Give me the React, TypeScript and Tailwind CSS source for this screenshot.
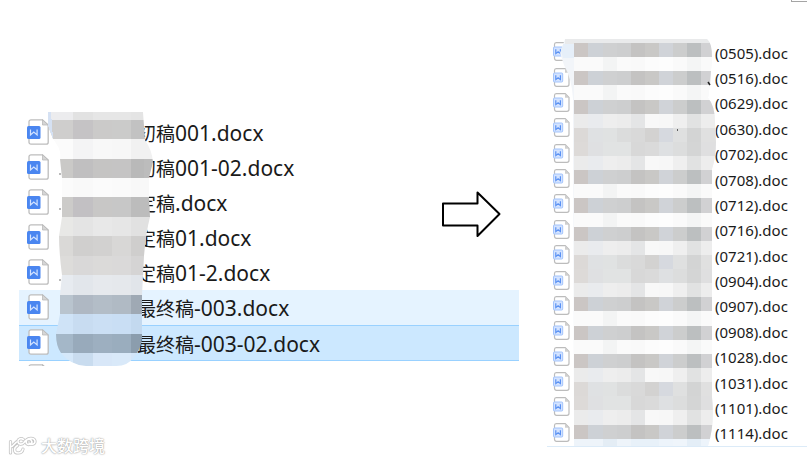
const drafts = [
  { name: "初稿", suffix: "001.docx" },
  { name: "初稿", suffix: "001-02.docx" },
  { name: "定稿", suffix: ".docx" },
  { name: "定稿", suffix: "01.docx" },
  { name: "定稿", suffix: "01-2.docx" },
  { name: "最终稿", suffix: "-003.docx", row: "h-[35px] bg-[#e5f3ff]" },
  { name: "最终稿", suffix: "-003-02.docx", row: "h-9 bg-[#cce8ff] border-y border-[#99d1ff]" },
];

const dates = [
  "0505", "0516", "0629", "0630", "0702", "0708", "0712", "0716",
  "0721", "0904", "0907", "0908", "1028", "1031", "1101", "1114",
];

// Each entry is one band: [top, bottom, one colour per column]
const draftBands: [number, number, string[]][] = [
  [0, 8, ["#ececee", "#e2e2e2", "#e6e6e6", "#e6e6e6", "#e4e4e4", "#e4e4e4"]],
  [8, 27, ["#cfcecd", "#c5c3c5", "#cbcac9", "#cbcbca", "#c2c2c2", "#c2c2c2"]],
  [27, 47, ["#fbfbfb", "#f4f4f5", "#f8f8f8", "#f7f7f7", "#f1f1f1", "#f1f1f1"]],
  [47, 66, ["#cac9c7", "#c0bfc0", "#c5c4c3", "#c5c4c4", "#b9b9b9", "#bcbcbc"]],
  [66, 85, ["#fbfbfb", "#f9f9f9", "#fbfbfb", "#fafafa", "#f8f8f8", "#f8f8f8"]],
  [85, 105, ["#cccbc9", "#c2c0c3", "#c8c7c6", "#c7c7c7", "#bcbcbc", "#bcbcbc"]],
  [105, 124, ["#e8e8e6", "#e4e4e4", "#e8e8e8", "#e6e6e6", "#e1e1e1", "#e1e1e1"]],
  [124, 144, ["#dad9d7", "#d0cfce", "#d2d1d0", "#d8d7d6", "#cfcecd", "#cfcecd"]],
  [144, 163, ["#dddcda", "#d9d8d8", "#dbdad9", "#dad9d9", "#d5d4d4", "#d5d4d4"]],
  [163, 183, ["#e7ebf0", "#e2e6eb", "#e6e9ed", "#e5e8ec", "#e1e5ea", "#e1e5ea"]],
  [183, 202, ["#b9c4ce", "#afb8c3", "#b3bdc7", "#b0bac4", "#9fa9b4", "#9fa9b4"]],
  [202, 222, ["#cfe3f7", "#c8dcf1", "#cbdff4", "#c9def4", "#c3d9ef", "#c3d9ef"]],
  [222, 241, ["#a4b7c8", "#98aabb", "#9dafc0", "#9aadbe", "#8b9dad", "#8b9dad"]],
  [241, 254, ["#d5e8fa", "#c9dcef", "#d8e7f8", "#d9e9f9", "#d3e6f9", "#d3e6f9"]],
];
const draftColumns = [0, 25, 45, 64, 83, 96, 108];

const dark = ["#cbc6c4", "#cdd1d6", "#cfd0d1", "#cdcecf", "#c4c3c2", "#c9c8c6", "#d0d3d8", "#cccdcd", "#bcbfc0", "#d1d1d3"];
const pale = ["#fafafa", "#fafafa", "#f3f4f4", "#fafafa", "#f9f9f9", "#fcfcfc", "#fdfdfd", "#fafafa", "#f4f5f5", "#fafafa"];
const soft = ["#ebebeb", "#e9ebee", "#eeeeee", "#ececec", "#e4e5e6", "#f8f8f8", "#f7f7f7", "#efefef", "#e1e2e2", "#ededed"];
const mid = ["#dcd9d7", "#dfe1e3", "#e0e2e2", "#dbdcdc", "#d9d9d9", "#d3d2d1", "#d6d9df", "#dfe0e0", "#d3d4d4", "#e0e0e0"];
const even = ["#dddad8", "#dfe0e2", "#e1e3e3", "#e1e3e3", "#d8d8d8", "#dadada", "#dee0e2", "#dcdddd", "#d4d5d5", "#dfdfe0"];
const blue = ["#eef4fa", "#eef4fa", "#e4edf5", "#eef4fa", "#e8f1f9", "#e8f1f9", "#edf4fb", "#eff5fb", "#e4eef7", "#edf4fb"];
const dateBands = [
  dark, pale, dark, pale, dark, soft, mid, even, soft,
  dark, pale, dark, pale, dark, soft, mid, even, soft,
  dark, pale, dark, pale, dark, soft, mid, even, soft,
  dark, blue,
];

function DocxIcon() {
  return (
    <svg width="22" height="26" viewBox="0 0 22 26" fill="none" className="mb-0.5 shrink-0">
      <path d="M4 .8h11.5L21.2 6v17.2a2 2 0 0 1-2 2H4a2 2 0 0 1-2-2V2.800a2 2 0 0 1 2-2Z" fill="#fff" stroke="#bdbdbd" strokeWidth="1.3" />
      <path d="M15.5.8V6h5.7Z" fill="#d6d6d6" stroke="#b9b9b9" strokeWidth=".8" />
      <rect y="7" width="13.5" height="13" rx="1.500" fill="#4a86f0" />
      <path d="M3.500 10.500v5.500l3.300-3 3.300 3v-5.500" stroke="#d3e3ff" strokeWidth="1.200" />
    </svg>
  );
}

function DocIcon() {
  return (
    <svg width="17" height="19" viewBox="0 0 17 19" fill="none" className="mb-0.5 shrink-0">
      <path d="M3.2.7h9L16 4.6v11.7a2 2 0 0 1-2 2H3.500a2 2 0 0 1-2-2V2.500A1.800 1.800 0 0 1 3.200.7Z" fill="#fff" stroke="#bcbcbc" strokeWidth="1.2" />
      <path d="M12 .7v4h4Z" fill="#cfcfcf" />
      <rect x=".5" y="5" width="9.200" height="9" rx="1" fill="#d3e3ff" stroke="#a3c4fc" />
      <path d="M2.800 7.200v4.400l2.300-1.900 2.300 1.900V7.200" stroke="#5a91f3" strokeWidth="1.2" />
    </svg>
  );
}

function DraftMosaic() {
  return (
    <svg width="108" height="254" viewBox="0 0 108 254" className="absolute left-[29px] -top-[3px]" aria-hidden="true">
      <clipPath id="draft-shape">
        <path d="M0 0H95L97 28Q104 38 105 50L101 66V85L102 105Q98 120 96 144L94 183V222H94Q95 234 86 245Q80 254 68 254H38Q22 253 13 241Q8 234 8 222L12 202V183L14 163Q11 140 11 124L14 105V66L12 47Q14 38 5 27L0 14Z" />
      </clipPath>
      <g clipPath="url(#draft-shape)" shapeRendering="crispEdges">
        {draftBands.map(([top, bottom, colors]) =>
          colors.map((color, i) => (
            <rect
              key={`${top}-${i}`}
              x={draftColumns[i]}
              y={top}
              width={draftColumns[i + 1] - draftColumns[i]}
              height={bottom - top}
              fill={color}
            />
          ))
        )}
        <path d="M0 0h3L5 27 0 14Z" fill="#d5e1f3" />
      </g>
      <path d="M11 62h2M11 97h2M11 168h2" stroke="#777" strokeWidth="1.2" />
    </svg>
  );
}

function DateMosaic() {
  return (
    <svg width="160" height="407" viewBox="0 0 160 407" className="absolute left-3 -top-px" aria-hidden="true">
      <clipPath id="date-shape">
        <path d="M6 0H148Q153 4 153 18L151 45L149 59Q156 66 156 84L157 103Q157 118 153 130V358Q156 385 149 407H15L14 60Q13 40 5 26L1 14Z" />
      </clipPath>
      <g clipPath="url(#date-shape)">
        <rect width="160" height="407" fill="#f2f5f9" />
        <rect x="6" width="154" height="5" fill="#e9eaeb" />
        <path d="M0 5h16v14H4Z" fill="#e6eff9" />
        <g shapeRendering="crispEdges">
          {dateBands.map((colors, row) =>
            colors.map((color, i) => (
              <rect
                key={`${row}-${i}`}
                x={15.3 + i * 14.13}
                y={4 + row * 14.13}
                width={i === 9 ? 20 : 14.13}
                height="14.13"
                fill={color}
              />
            ))
          )}
        </g>
      </g>
      <path d="M149 43l2 3" stroke="#222" strokeWidth="1.5" />
      <path d="M118 91h1" stroke="#333" strokeWidth="1.5" />
    </svg>
  );
}

function Watermark() {
  const mark =
    "M2.500 5.500V17M8.500 6 4 10.500M9.500 9.500C5 12 6 17 10 17c3 0 4.500-1.500 5-4M15.500 3.500c-3-2-6 0-5.500 2.500s4 3 6 .5c1.500-2.500 5-4.500 7-2.500s0 5-3 4.500c-2-.5-3-4 0-5.500 3-1.500 7-.5 7 2.500s-4 3.500-6 1.500";
  return (
    <div className="absolute bottom-1 left-2 flex items-center gap-1 text-white">
      <svg width="29" height="20" viewBox="0 0 29 20" fill="none" strokeLinecap="round" strokeLinejoin="round">
        <path d={mark} stroke="#c4c4c4" strokeWidth="3.2" />
        <path d={mark} stroke="#fff" strokeWidth="1.6" />
      </svg>
      <span className="text-[16px] leading-5 font-medium [text-shadow:0_0_1px_#999,0_0_2px_#aaa]">大数跨境</span>
    </div>
  );
}

export default function App() {
  return (
    <main className="relative flex min-h-screen items-start overflow-hidden bg-white pl-[19px] font-['Noto_Sans','Noto_Sans_CJK_SC',sans-serif] text-[#1a1a1a]">
      <section className="relative mt-[115px] mr-[28px] flex-1">
        <ul>
          {drafts.map((file) => (
            <li key={file.name + file.suffix} className={`flex items-center pl-2 ${file.row ?? "h-[35px]"}`}>
              <DocxIcon />
              <span className="mt-0.5 ml-[88px] flex items-baseline leading-8 whitespace-nowrap">
                <span className="text-[19px]">{file.name}</span>
                <span className="text-[21px]">{file.suffix}</span>
              </span>
            </li>
          ))}
          <li className="h-[5px] overflow-hidden pt-[3px] pl-2">
            <DocxIcon />
          </li>
        </ul>
        <DraftMosaic />
        <svg width="60" height="48" viewBox="0 0 60 48" fill="none" className="absolute top-[75px] right-[18px]">
          <path d="M2 13.500H36.500V2.500L58.500 24 36.500 46V35.500H2Z" fill="#fff" stroke="#000" strokeWidth="2" strokeLinejoin="round" />
        </svg>
      </section>

      <section className="relative mt-10 w-[260px] border-b border-[#dcebf8]">
        <ul className="grid h-[406px] auto-rows-fr">
          {dates.map((date) => (
            <li key={date} className="flex items-center pl-[6px] text-[15px] leading-6">
              <DocIcon />
              <span className="ml-[145px]">({date}).doc</span>
            </li>
          ))}
        </ul>
        <DateMosaic />
      </section>

      <div className="absolute top-0 right-0 h-0.5 w-4 border-b border-l border-[#a5a5a5]" />
      <Watermark />
    </main>
  );
}
